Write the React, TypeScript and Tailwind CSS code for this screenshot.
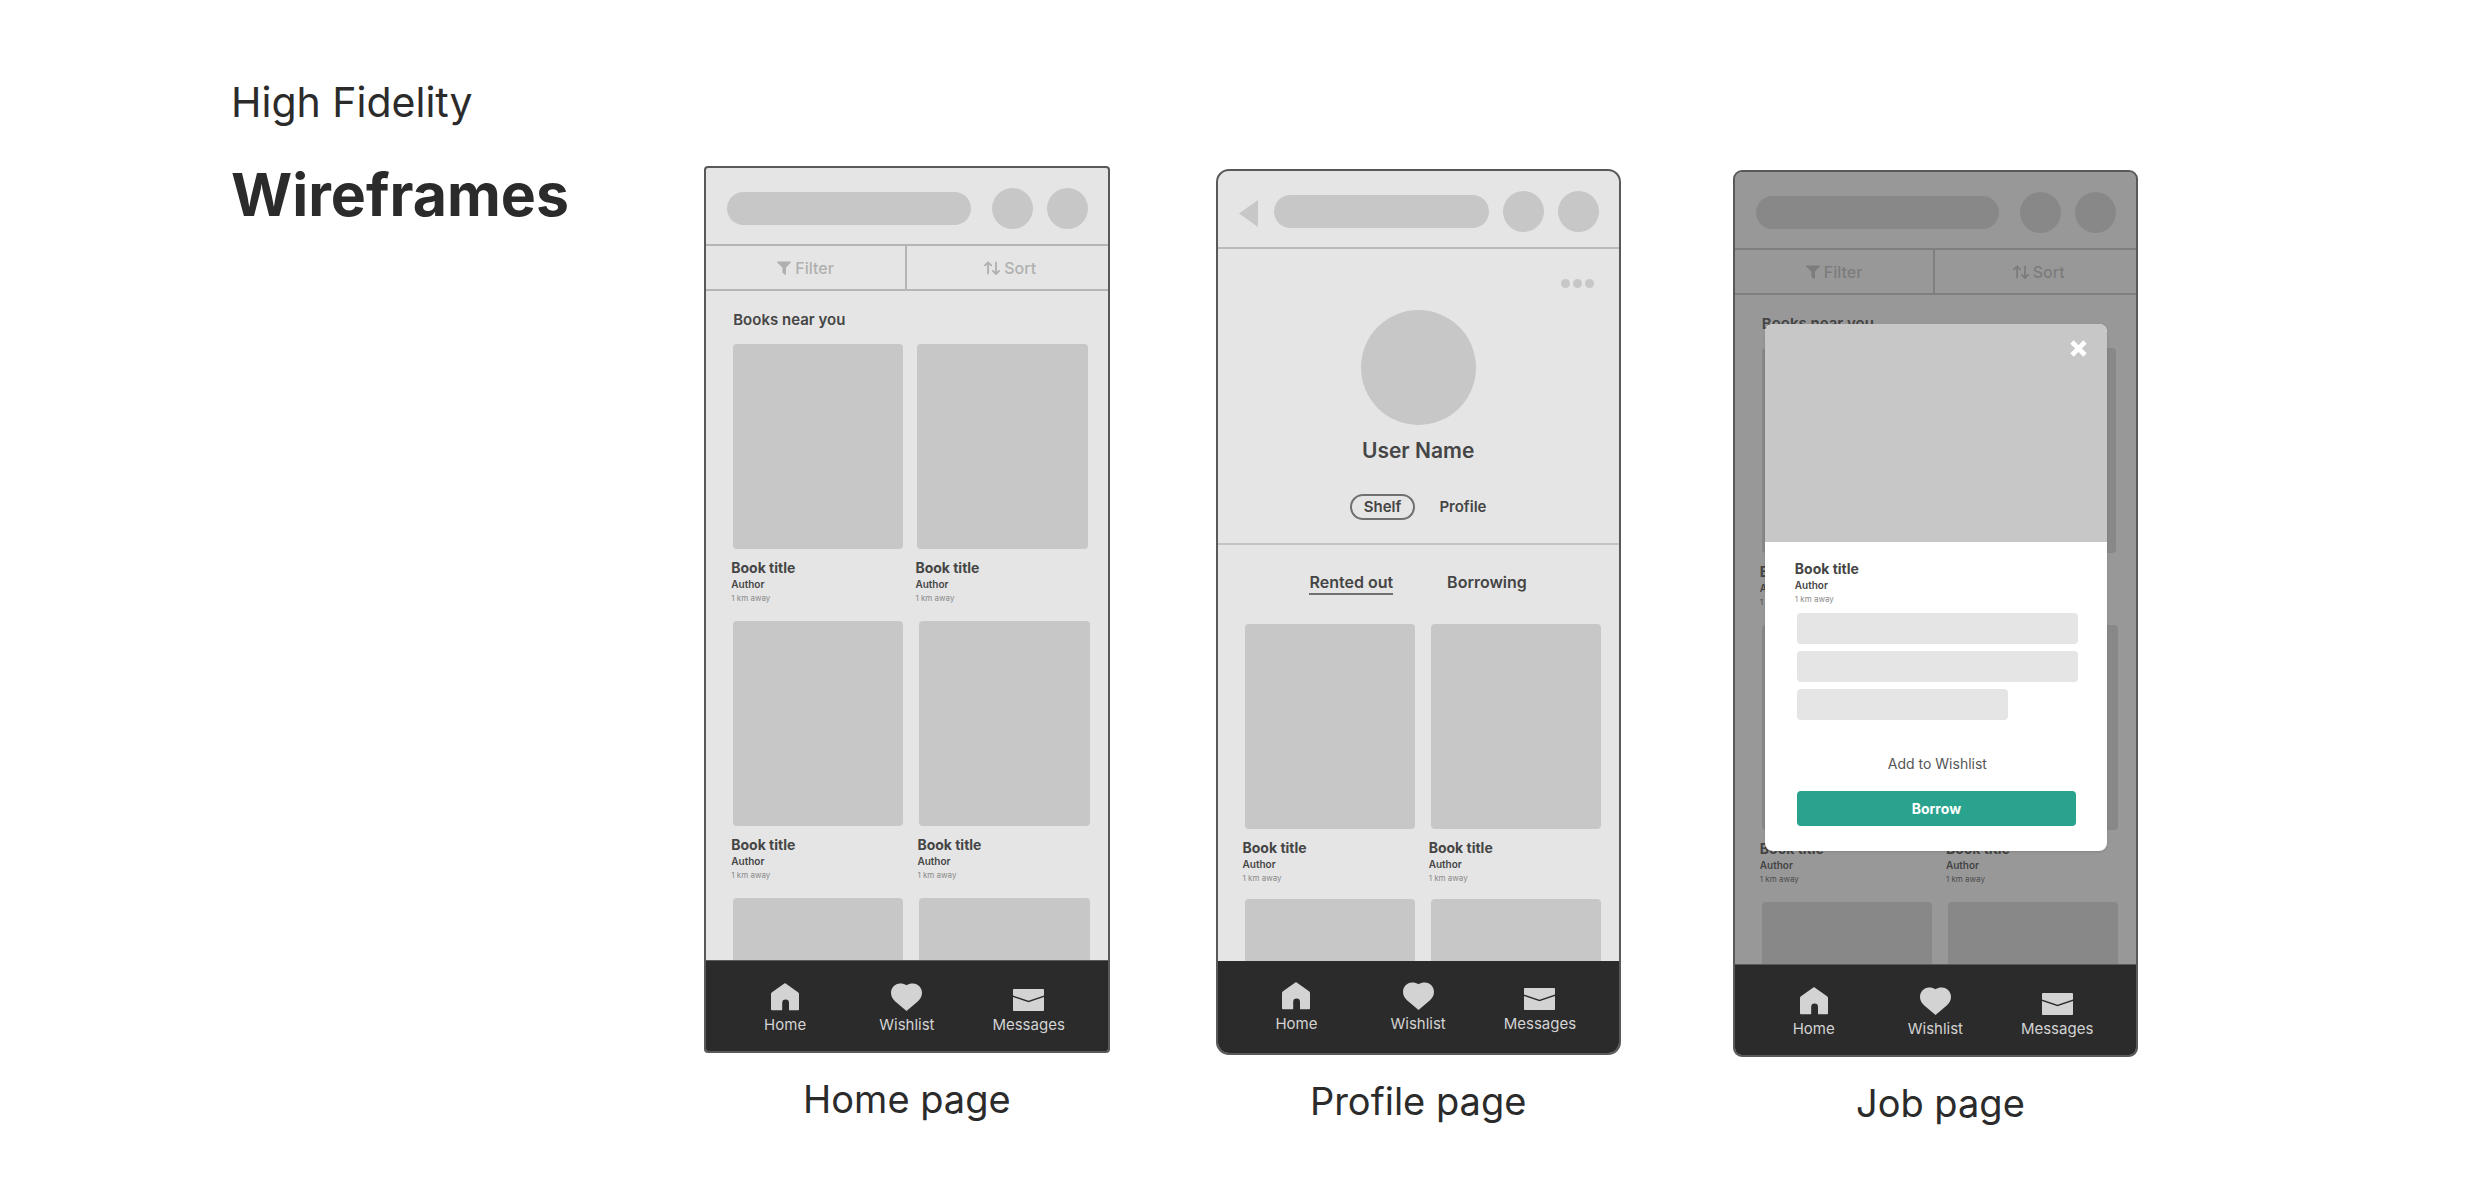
import React, { type ReactNode } from "react";

function FilterIcon() {
  return (
    <svg className="size-3.5" viewBox="0 0 14 14" fill="currentColor" aria-hidden="true">
      <path d="M0.7 0.5h12.6c.6 0 .9.7.5 1.1L9 6.6v6.7c0 .5-.6.8-1 .5l-2.2-1.9a1 1 0 0 1-.4-.8V6.6L.2 1.6C-.2 1.2.1.5.7.5z" />
    </svg>
  );
}

function SortIcon() {
  return (
    <svg className="h-3.5 w-4" viewBox="0 0 16 14" fill="none" stroke="currentColor" strokeWidth="1.8" strokeLinecap="round" strokeLinejoin="round" aria-hidden="true">
      <path d="M4.1 12.5V1.3M1 4.4L4.100 1.300l3.100 3.100" />
      <path d="M12 1.300v11.700M8.900 9.900l3.100 3.100 3.100-3.100" />
    </svg>
  );
}

function BackIcon() {
  return (
    <svg className="h-[33px] w-[19px]" viewBox="0 0 19 33" fill="currentColor" aria-hidden="true">
      <path d="M0 18.500L19 5v27z" />
    </svg>
  );
}

function CloseIcon() {
  return (
    <svg className="size-[17px]" viewBox="0 0 17 17" fill="none" stroke="currentColor" strokeWidth="4.6" aria-hidden="true">
      <path d="M2 2l13 13M15 2L2 15" />
    </svg>
  );
}

function HomeIcon() {
  return (
    <svg className="h-7 w-7" viewBox="0 0 28 28" fill="currentColor" aria-hidden="true">
      <path d="M13.3.6a1.200 1.200 0 0 1 1.400 0L27 9.300c.6.4 1 1 1 1.700v15.200c0 .6-.4 1-1 1h-8.500a.5.5 0 0 1-.5-.5V20a3.400 3.400 0 0 0-6.800 0v6.700c0 .3-.2.5-.5.5H1a1 1 0 0 1-1-1V11c0-.7.4-1.300 1-1.700z" />
    </svg>
  );
}

function HeartIcon() {
  return (
    <svg className="h-7 w-[31px]" viewBox="0 0 31 28" fill="currentColor" aria-hidden="true">
      <path d="M15.500 2.200C17.500.9 19.800.4 22 .5c5 .2 9 4.200 9 9.300 0 3.500-1.500 6-4.300 8.700L15.500 28 4.300 18.500C1.500 15.800 0 13.300 0 9.800 0 4.700 4 .7 9 .5c2.200-.1 4.500.4 6.500 1.700z" />
    </svg>
  );
}

function MailIcon() {
  return (
    <svg className="h-[22px] w-[31px]" viewBox="0 0 31 22" fill="currentColor" aria-hidden="true">
      <path d="M.8 0h29.400c.5 0 .8.3.8.8V6.500L15.500 11.700 0 6.500V.8C0 .3.3 0 .8 0z" />
      <path d="M0 8l15.500 5.200L31 8v13.200c0 .5-.3.8-.8.8H.8a.8.8 0 0 1-.8-.8z" />
    </svg>
  );
}

function SearchBar() {
  return (
    <input
      type="search"
      aria-label="Search"
      className="h-[33px] w-0 min-w-0 flex-1 rounded-full bg-[#c7c7c7] px-4 text-[14px] outline-none"
    />
  );
}

function RoundButton({ label }: { label: string }) {
  return <button type="button" aria-label={label} className="size-[41px] shrink-0 rounded-full bg-[#c7c7c7]" />;
}

function BookInfo({ distanceColor = "text-[#8a8a8a]" }: { distanceColor?: string }) {
  return (
    <div className="-ml-0.5 pt-2.5 text-[#454545]">
      <h4 className="text-[14px] leading-[18px] font-bold">Book title</h4>
      <p className="text-[10px] leading-[14px] font-semibold">Author</p>
      <p className={`text-[8px] leading-[14px] ${distanceColor}`}>1 km away</p>
    </div>
  );
}

function BookRow({ gap, distanceColor }: { gap: string; distanceColor?: string }) {
  return (
    <div className={`grid grid-cols-2 ${gap}`}>
      {["left", "right"].map((side) => (
        <article key={side}>
          <div className="h-[205px] rounded bg-[#c7c7c7]" />
          <BookInfo distanceColor={distanceColor} />
        </article>
      ))}
    </div>
  );
}

function CutOffRow() {
  return (
    <div className="grid grid-cols-2 gap-4">
      <div className="h-[62px] rounded-t bg-[#c7c7c7]" />
      <div className="h-[62px] rounded-t bg-[#c7c7c7]" />
    </div>
  );
}

const tabs = [
  { label: "Home", icon: <HomeIcon /> },
  { label: "Wishlist", icon: <HeartIcon /> },
  { label: "Messages", icon: <MailIcon /> },
];

function BottomNav({ className }: { className: string }) {
  return (
    <nav className={`grid grid-cols-3 bg-[#2b2b2b] px-[18px] ${className}`}>
      {tabs.map((tab) => (
        <a key={tab.label} href="#" className="flex flex-col items-center gap-1 text-[#d3d3d3]">
          <span className="flex h-7 items-end">{tab.icon}</span>
          <span className="text-[15px] leading-5">{tab.label}</span>
        </a>
      ))}
    </nav>
  );
}

function Phone({ radius, navClass, children }: { radius: string; navClass: string; children: ReactNode }) {
  return (
    <div className={`overflow-hidden border-2 border-[#595959] bg-[#e5e5e5] ${radius}`}>
      {children}
      <BottomNav className={navClass} />
    </div>
  );
}

function HomeContent({ distanceColor }: { distanceColor?: string }) {
  return (
    <>
      <div className="flex items-center border-b-2 border-[#b5b5b5] pt-5 pr-5 pb-[15px] pl-[21px]">
        <SearchBar />
        <div className="ml-[21px] flex gap-3.5">
          <RoundButton label="Notifications" />
          <RoundButton label="Account" />
        </div>
      </div>
      <div className="grid grid-cols-2 border-b-2 border-[#b5b5b5] text-[16px] leading-5 font-medium text-[#b0b0b0]">
        <button type="button" className="flex h-[43px] items-center justify-center gap-1 border-r-2 border-[#b5b5b5]">
          <FilterIcon />
          Filter
        </button>
        <button type="button" className="flex h-[43px] items-center justify-center gap-1 pl-1.5">
          <SortIcon />
          Sort
        </button>
      </div>
      <div className="pt-[17px] pr-[18px] pl-[27px]">
        <h3 className="text-[15px] leading-6 font-semibold text-[#454545]">Books near you</h3>
        <div className="flex flex-col gap-4 pt-3">
          <BookRow gap="gap-3.5 pr-0.5" distanceColor={distanceColor} />
          <BookRow gap="gap-4" distanceColor={distanceColor} />
          <CutOffRow />
        </div>
      </div>
    </>
  );
}

function ProfileContent() {
  return (
    <>
      <div className="flex items-center border-b-2 border-[#bababa] pt-5 pr-5 pb-[15px] pl-[21px]">
        <button type="button" aria-label="Back" className="mr-4 text-[#c7c7c7]">
          <BackIcon />
        </button>
        <SearchBar />
        <div className="ml-3.5 flex gap-3.5">
          <RoundButton label="Notifications" />
          <RoundButton label="Account" />
        </div>
      </div>
      <div className="flex flex-col items-center border-b-2 border-[#c4c4c4] pt-[30px] pb-[23px] font-semibold text-[#454545]">
        <button type="button" aria-label="More" className="mr-[25px] flex gap-[3px] self-end">
          <span className="size-[9px] rounded-full bg-[#c7c7c7]" />
          <span className="size-[9px] rounded-full bg-[#c7c7c7]" />
          <span className="size-[9px] rounded-full bg-[#c7c7c7]" />
        </button>
        <div className="mt-[22px] size-[115px] rounded-full bg-[#c7c7c7]" />
        <h3 className="mt-3 text-[21px] leading-7">User Name</h3>
        <div className="mt-[29px] flex items-center gap-6 text-[15px] leading-5">
          <button type="button" className="h-[26px] rounded-full border-2 border-[#707070] px-3">
            <span className="block">Shelf</span>
          </button>
          <button type="button">Profile</button>
        </div>
      </div>
      <div className="flex items-start justify-center gap-[54px] pt-[27px] text-[16px] leading-5 font-semibold text-[#454545]">
        <button type="button" className="border-b-2 border-[#707070] pb-px">Rented out</button>
        <button type="button">Borrowing</button>
      </div>
      <div className="flex flex-col gap-3.5 pt-[29px] pr-[18px] pl-[27px]">
        <BookRow gap="gap-4" />
        <CutOffRow />
      </div>
    </>
  );
}

function JobDialog() {
  return (
    <div className="absolute inset-0 bg-[#424242]/47">
      <div role="dialog" aria-label="Book title" className="absolute top-[152px] right-[29px] left-[30px] overflow-hidden rounded-lg bg-white shadow-sm">
        <div className="flex h-[218px] items-start justify-end bg-[#c7c7c7] pt-4 pr-5">
          <button type="button" aria-label="Close" className="text-white">
            <CloseIcon />
          </button>
        </div>
        <div className="flex flex-col pt-2 pr-[29px] pb-[25px] pl-8">
          <BookInfo />
          <div className="mt-[7px] flex flex-col gap-[7px]">
            <div className="h-[31px] rounded bg-[#e5e5e5]" />
            <div className="h-[31px] rounded bg-[#e5e5e5]" />
            <div className="h-[31px] w-3/4 rounded bg-[#e5e5e5]" />
          </div>
          <button type="button" className="mt-[34px] self-center text-[14px] leading-5 text-[#555555]">
            Add to Wishlist
          </button>
          <button type="button" className="mt-[17px] mr-0.5 h-[35px] rounded bg-[#2aa38e] text-[14px] leading-5 font-bold text-white">
            Borrow
          </button>
        </div>
      </div>
    </div>
  );
}

function Caption({ children, className = "" }: { children: ReactNode; className?: string }) {
  return (
    <figcaption className={`mt-[22px] text-center text-[38px] leading-[48px] text-[#2b2b2b] ${className}`}>
      {children}
    </figcaption>
  );
}

export default function App() {
  return (
    <main className="grid min-h-screen grid-cols-[minmax(0,473fr)_minmax(0,511fr)_minmax(0,517fr)_minmax(0,405fr)] items-start bg-white pr-[343px] pl-[231px] font-['Inter',sans-serif]">
      <header className="pt-[78px] text-[#2b2b2b]">
        <p className="text-[41px] leading-[48px]">High Fidelity</p>
        <h1 className="mt-[33px] text-[59px] leading-[72px] font-bold">Wireframes</h1>
      </header>

      <figure className="pt-[166px] pr-[106px]">
        <Phone radius="rounded" navClass="border-t border-[#595959] pt-[22px] pb-4">
          <HomeContent />
        </Phone>
        <Caption>Home page</Caption>
      </figure>

      <figure className="pt-[169px] pr-[112px]">
        <Phone radius="rounded-[13px]" navClass="pt-[21px] pb-[19px]">
          <ProfileContent />
        </Phone>
        <Caption>Profile page</Caption>
      </figure>

      <figure className="pt-[170px]">
        <Phone radius="rounded-[9px]" navClass="border-t border-[#595959] pt-[22px] pb-4">
          <div className="relative">
            <HomeContent distanceColor="text-[#555555]" />
            <JobDialog />
          </div>
        </Phone>
        <Caption className="pl-2.5">Job page</Caption>
      </figure>
    </main>
  );
}
